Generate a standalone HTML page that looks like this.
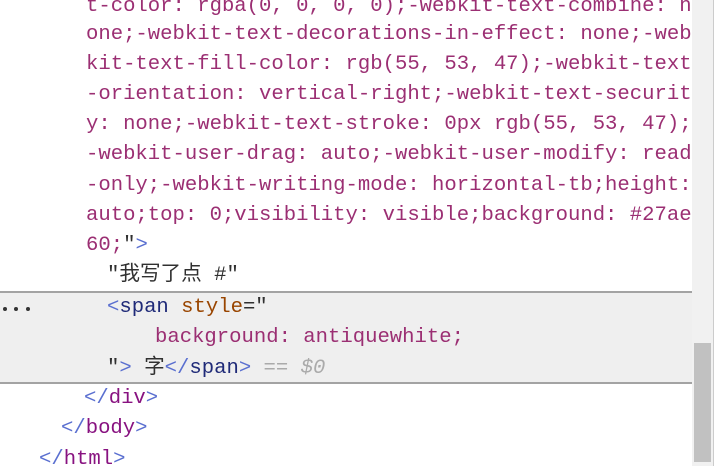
<!DOCTYPE html>
<html><head><style>
html,body{margin:0;padding:0;width:718px;height:466px;overflow:hidden;background:#fff;}
.l{position:absolute;white-space:pre;font-family:"Liberation Mono","Noto Sans CJK SC",monospace;font-size:20.6px;line-height:30px;height:30px;}
.v{color:#9b2f73}
.b{color:#5a6fd0}
.t{color:#881280}
.n{color:#1f2a78}
.a{color:#994500}
.k{color:#303030}
.g{color:#aaa;font-style:italic}
#sel{position:absolute;left:0;top:291px;width:692px;height:89px;background:#efefef;border-top:2px solid #a3a3a3;border-bottom:2px solid #a3a3a3;}
#track{position:absolute;left:692px;top:0;width:21px;height:466px;background:#f1f1f1;}
#thumb{position:absolute;left:694px;top:343px;width:17px;height:119px;background:#c1c1c1;}
#edge{position:absolute;left:713px;top:0;width:5px;height:466px;background:#fff;border-left:1px solid #ccc;}
.dot{position:absolute;top:307px;width:4px;height:4px;border-radius:2px;background:#333;}
</style></head><body>
<div id="sel"></div>
<div class="dot" style="left:3px"></div><div class="dot" style="left:14px"></div><div class="dot" style="left:26px"></div>
<div class="l v" style="left:86px;top:-8px">t-color: rgba(0, 0, 0, 0);-webkit-text-combine: n</div>
<div class="l v" style="left:86px;top:20px">one;-webkit-text-decorations-in-effect: none;-web</div>
<div class="l v" style="left:86px;top:50px">kit-text-fill-color: rgb(55, 53, 47);-webkit-text</div>
<div class="l v" style="left:86px;top:80px">-orientation: vertical-right;-webkit-text-securit</div>
<div class="l v" style="left:86px;top:110px">y: none;-webkit-text-stroke: 0px rgb(55, 53, 47);</div>
<div class="l v" style="left:86px;top:140px">-webkit-user-drag: auto;-webkit-user-modify: read</div>
<div class="l v" style="left:86px;top:171px">-only;-webkit-writing-mode: horizontal-tb;height:</div>
<div class="l v" style="left:86px;top:201px">auto;top: 0;visibility: visible;background: #27ae</div>
<div class="l" style="left:86px;top:231px"><span class="v">60;</span><span class="k">"</span><span class="b">&gt;</span></div>
<div class="l k" style="left:107px;top:261px">"我写了点 #"</div>
<div class="l" style="left:107px;top:293px"><span class="b">&lt;</span><span class="n">span</span> <span class="a">style</span><span class="k">="</span></div>
<div class="l v" style="left:155px;top:323px">background: antiquewhite;</div>
<div class="l" style="left:107px;top:354px"><span class="k">"</span><span class="b">&gt;</span><span class="k"> 字</span><span class="b">&lt;/</span><span class="n">span</span><span class="b">&gt;</span> <span class="g">== $0</span></div>
<div class="l" style="left:84px;top:384px"><span class="b">&lt;/</span><span class="t">div</span><span class="b">&gt;</span></div>
<div class="l" style="left:61px;top:414px"><span class="b">&lt;/</span><span class="t">body</span><span class="b">&gt;</span></div>
<div class="l" style="left:39px;top:445px"><span class="b">&lt;/</span><span class="t">html</span><span class="b">&gt;</span></div>
<div id="track"></div><div id="thumb"></div><div id="edge"></div>
</body></html>
